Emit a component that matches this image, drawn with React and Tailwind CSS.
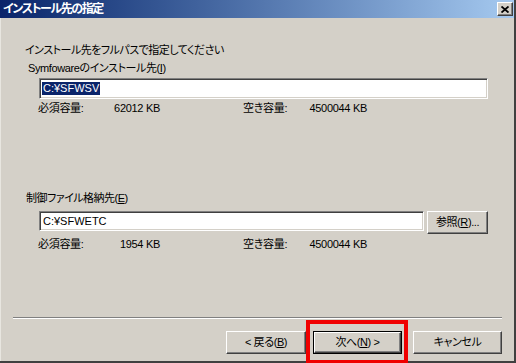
const font = "font-['Liberation_Sans','Noto_Sans_CJK_JP',sans-serif] [font-feature-settings:'palt']";

const sunken = "border border-t-[#808080] border-l-[#808080] border-b-white border-r-white shadow-[inset_1px_1px_0_#404040,inset_-1px_-1px_0_#d4d0c8] bg-white";
const raised = "border border-t-white border-l-white border-b-[#404040] border-r-[#404040] shadow-[inset_-1px_-1px_0_#808080] bg-[#d4d0c8]";

const Btn = ({ w, children, isDefault }) => (
  <div className={`${w} h-[23px] flex ${isDefault ? "border border-black" : ""}`}>
    <div className={`flex-1 ${raised} flex items-center justify-center text-[11px] tracking-[-0.4px] leading-none`}>
      {children}
    </div>
  </div>
);

const InfoRow = ({ need }) => (
  <div className="flex pl-[37px] text-[11px] tracking-[-0.3px] leading-[14px]">
    <span className="w-[63px]">必須容量:</span>
    <span className="w-[59px] text-right">{need} KB</span>
    <span className="ml-[83px] w-[53px]">空き容量:</span>
    <span className="w-[71px] text-right">4500044 KB</span>
  </div>
);

export default function App() {
  return (
    <div className={`w-[516px] h-[363px] bg-[#d4d0c8] flex flex-col border-r-2 border-b-2 border-r-[#404040] border-b-[#404040] text-black ${font}`}>
      {/* title bar */}
      <div className="h-[18px] flex items-center justify-between pl-[3px] pr-[1px] bg-linear-to-r from-[#0a246a] to-[#a6caf0]">
        <span className="text-white font-bold text-[12px] tracking-[-1.4px] leading-none">インストール先の指定</span>
        <div className={`w-[16px] h-[14px] ${raised} flex items-center justify-center`}>
          <svg width="8" height="7" viewBox="0 0 8 7">
            <path d="M0.5 0.5 L7.5 6.5 M7.5 0.5 L0.5 6.5" stroke="black" strokeWidth="1.8" />
          </svg>
        </div>
      </div>

      <div className="flex-1 flex flex-col border-l border-l-[#e8e6e0]">
        {/* install dir */}
        <div className="mt-[23px] pl-[24px] text-[11px] tracking-[-0.5px] leading-[18px]">
          インストール先をフルパスで指定してください
        </div>
        <div className="pl-[27px] text-[11px] tracking-[-0.4px] leading-[18px]">
          Symfowareのインストール先(<u>I</u>)
        </div>
        <div className={`ml-[38px] mr-[26px] mt-[1px] h-[21px] flex items-center px-[2px] ${sunken}`}>
          <span className="bg-[#0a246a] text-white text-[11px] leading-[13px] px-[1px]">C:¥SFWSV</span>
        </div>
        <div className="mt-[2px]">
          <InfoRow need="62012" />
        </div>

        {/* control files dir */}
        <div className="mt-[74px] pl-[25px] text-[11px] tracking-[-0.5px] leading-[18px]">
          制御ファイル格納先(<u>E</u>)
        </div>
        <div className="mt-[4px] flex items-start pl-[38px]">
          <div className={`w-[385px] h-[20px] flex items-center px-[3px] text-[11px] ${sunken}`}>C:¥SFWETC</div>
          <div className="ml-[3px]">
            <Btn w="w-[61px]">
              参照(<u>R</u>)...
            </Btn>
          </div>
        </div>
        <div className="mt-[3px]">
          <InfoRow need="1954" />
        </div>

        {/* separator */}
        <div className="mt-[66px] ml-[12px] mr-[12px] border-t border-t-[#808080] border-b border-b-white" />

        {/* buttons */}
        <div className="mt-[12px] flex justify-end pr-[12px]">
          <Btn w="w-[80px]">
            &lt; 戻る(<u>B</u>)
          </Btn>
          <div className="relative ml-[7px]">
            <Btn w="w-[89px]" isDefault>
              次へ(<u>N</u>) &gt;
            </Btn>
            <div className="absolute -left-[7px] -right-[6px] -top-[11px] -bottom-[10px] border-4 border-[#f00000] pointer-events-none" />
          </div>
          <div className="ml-[11px]">
            <Btn w="w-[89px]">キャンセル</Btn>
          </div>
        </div>
      </div>
    </div>
  );
}
